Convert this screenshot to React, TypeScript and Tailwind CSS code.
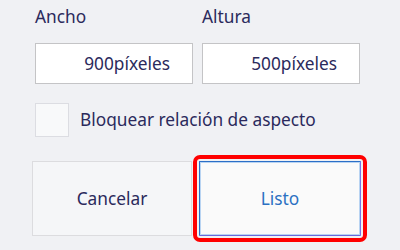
export default function App() {
  return (
    <div className="w-[400px] h-[250px] overflow-hidden bg-[#f0f1f4] text-[#2b2a5c] font-['Noto_Sans','Open_Sans',sans-serif] text-[17.3px]">
      <div className="flex gap-[9px] pl-[35px] pt-[5px]">
        <div className="flex flex-col w-[158px]">
          <span className="leading-[24px]">Ancho</span>
          <div className="mt-[14px] h-[41px] bg-white border border-[#c4c4c6] flex items-center justify-end pr-[22px]">
            900píxeles
          </div>
        </div>
        <div className="flex flex-col w-[158px]">
          <span className="leading-[24px]">Altura</span>
          <div className="mt-[14px] h-[41px] bg-white border border-[#c4c4c6] flex items-center justify-end pr-[22px]">
            500píxeles
          </div>
        </div>
      </div>
      <div className="flex items-center pl-[35px] mt-[19px] gap-[11px]">
        <div className="w-[34px] h-[34px] bg-[#f8f9fa] border border-[#dcdde2]" />
        <span>Bloquear relación de aspecto</span>
      </div>
      <div className="flex pl-[32px] mt-[24px] gap-[7px]">
        <button className="w-[160px] h-[75px] bg-[#f5f6f8] border border-[#dcdcdf] text-[#2b2a5c]">
          Cancelar
        </button>
        <button className="w-[162px] h-[75px] bg-[#fafafa] border border-t-[#2b6fc7] border-l-[#2b6fc7] border-r-[#7c72e6] border-b-[#6a68dc] shadow-[inset_0_0_0_1px_#b9d4f2] text-[#2b70c2] outline-4 outline-[#ff0000] outline-offset-[2px] rounded-[1px]">
          Listo
        </button>
      </div>
    </div>
  );
}
